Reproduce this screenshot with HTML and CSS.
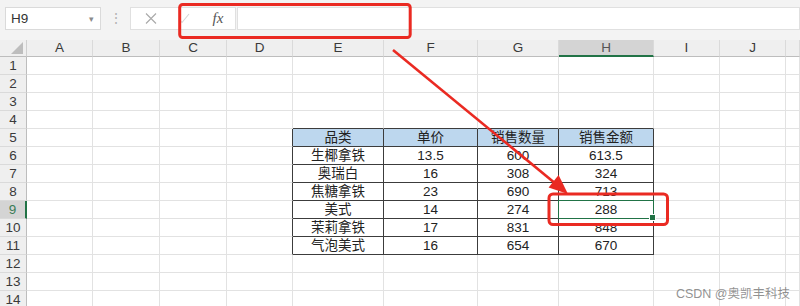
FILE: index.html
```html
<!DOCTYPE html>
<html lang="zh-CN">
<head>
<meta charset="UTF-8">
<title>H9</title>
<link rel="stylesheet" href="styles.css">
<script>
window.onload=function(){
	var oSheet=document.getElementById('sheet');
	var cols=['A','B','C','D','E','F','G','H','I','J',''];
	//表格数据 E5:H11
	var data=[
		['品类','单价','销售数量','销售金额'],
		['生椰拿铁','13.5','600','613.5'],
		['奥瑞白','16','308','324'],
		['焦糖拿铁','23','690','713'],
		['美式','14','274','288'],
		['茉莉拿铁','17','831','848'],
		['气泡美式','16','654','670']
	];
	var html='<div class="corner"><i></i></div>';
	for(var c=0; c<cols.length; c++){
		html+='<div class="colh'+(c==7?' on':'')+'">'+cols[c]+'</div>';
	}
	for(var r=1; r<=14; r++){
		html+='<div class="rowh'+(r==9?' on':'')+'">'+r+'</div>';
		for(var c=0; c<cols.length; c++){
			var cls='cell';
			var txt='';
			var inT=r>=5 && r<=11 && c>=4 && c<=7;
			if(inT){
				cls+=' tb';
				if(r==5)cls+=' th';
				txt=data[r-5][c-4];
			}
			if(c==3 && r>=5 && r<=11)cls+=' tl';
			if(r==4 && c>=4 && c<=7)cls+=' tt';
			if(r==9 && c==7)cls+=' sel';
			html+='<div class="'+cls+'">'+txt+'</div>';
		}
	}
	oSheet.innerHTML=html;
};
</script>
</head>
<body>
<div class="app">
	<div class="bar">
		<div class="namebox"><span>H9</span><em>▾</em></div>
		<div class="dots">⋮</div>
		<div class="btns">
			<span class="x"><svg width="12" height="11" viewBox="0 0 12 11"><path d="M1 0.5L11 10.5M11 0.5L1 10.5" stroke="#a9a9a9" stroke-width="1.1" fill="none"/></svg></span>
			<span class="ok"><svg width="12" height="11" viewBox="0 0 12 11"><path d="M1 6L4 9.5L11 1" stroke="#d6d6d6" stroke-width="1.1" fill="none"/></svg></span>
			<span class="fx">fx</span>
		</div>
		<div class="input"></div>
	</div>
	<div class="sheet" id="sheet"></div>

	<svg class="mark" width="800" height="306" viewBox="0 0 800 306">
		<rect x="179.7" y="4.5" width="230.5" height="33" rx="3" fill="none" stroke="#ea2a22" stroke-width="3"/>
		<rect x="549" y="194" width="118.5" height="30.5" rx="4" fill="none" stroke="#ea2a22" stroke-width="3"/>
		<line x1="393" y1="50" x2="556" y2="184" stroke="#ea2a22" stroke-width="2.6"/>
		<polygon points="568,194 548.6,187.5 558.6,175" fill="#ea2a22"/>
	</svg>
	<div class="wm">CSDN @奥凯丰科技</div>
</div>
</body>
</html>
```

FILE: styles.css
```css
*{margin:0;padding:0;box-sizing:border-box;}
body{background:#fff;font-family:"Liberation Sans","Noto Sans CJK SC",sans-serif;color:#222;}
.app{position:relative;width:800px;height:306px;overflow:hidden;}

.bar{height:40px;background:#f3f3f3;display:flex;align-items:flex-start;padding:7px 0 0 5px;}
.namebox{width:96px;height:23px;background:#fff;border:1px solid #dadada;display:flex;align-items:center;justify-content:space-between;padding:0 6px 0 5px;font-size:13.5px;color:#333;}
.namebox em{font-style:normal;font-size:9px;color:#8a8a8a;}
.dots{width:29px;height:23px;text-align:center;line-height:23px;font-size:14px;color:#b3b3b3;}
.btns{width:106px;height:23px;background:#fff;border:1px solid #e0e0e0;display:flex;align-items:center;}
.btns span{display:flex;justify-content:center;align-items:center;}
.btns .x{width:36px;padding-left:4px;}
.btns .ok{width:34px;}
.btns .fx{width:34px;font-family:"Liberation Serif",serif;font-style:italic;font-size:15px;color:#555;}
.input{flex:1;height:23px;background:#fff;border:1px solid #e0e0e0;margin-left:1px;}

.sheet{display:grid;grid-template-columns:27px 66px 67px 67px 66px 91px 94px 81px 95px 66px 66px 1fr;grid-template-rows:17px;grid-auto-rows:18px;}
.corner{background:#efefef;border-right:1px solid #cfcfcf;border-bottom:1px solid #bdbdbd;display:flex;align-items:flex-end;justify-content:flex-end;padding:0 3px 2px 0;}
.corner i{display:block;width:12px;height:12px;background:#bdbdbd;clip-path:polygon(100% 0,100% 100%,0 100%);}
.colh{background:#efefef;border-right:1px solid #dadada;border-bottom:1px solid #bdbdbd;text-align:center;font-size:13.5px;line-height:16px;color:#3a3a3a;}
.colh.on{background:#d4d4d4;border-bottom:2px solid #217346;color:#555;}
.rowh{background:#efefef;border-right:1px solid #bdbdbd;border-bottom:1px solid #dadada;text-align:center;font-size:13.5px;line-height:17px;color:#3a3a3a;}
.rowh.on{background:#d4d4d4;border-right:2px solid #217346;color:#3b7d57;}

.cell{border-right:1px solid #e2e2e2;border-bottom:1px solid #e2e2e2;text-align:center;font-family:"Liberation Sans","Noto Sans CJK SC",sans-serif;font-size:13.5px;line-height:17px;white-space:nowrap;color:#222;}
.cell.tb{border-right-color:#3c3c3c;border-bottom-color:#3c3c3c;}
.cell.th{background:#bdd7ee;}
.cell.tl{border-right-color:#3c3c3c;}
.cell.tt{border-bottom-color:#3c3c3c;}
.cell.sel{position:relative;}
.cell.sel::before{content:"";position:absolute;left:-1px;top:-1px;right:-1px;bottom:-1px;border:1.5px solid #217346;}
.cell.sel::after{content:"";position:absolute;right:-3px;bottom:-3px;width:5px;height:5px;background:#217346;border:1px solid #fff;}

.mark{position:absolute;left:0;top:0;pointer-events:none;}
.wm{position:absolute;right:10px;bottom:4px;font-size:12.5px;color:rgba(110,110,110,0.75);font-family:"Liberation Sans","Noto Sans CJK SC",sans-serif;}
```
